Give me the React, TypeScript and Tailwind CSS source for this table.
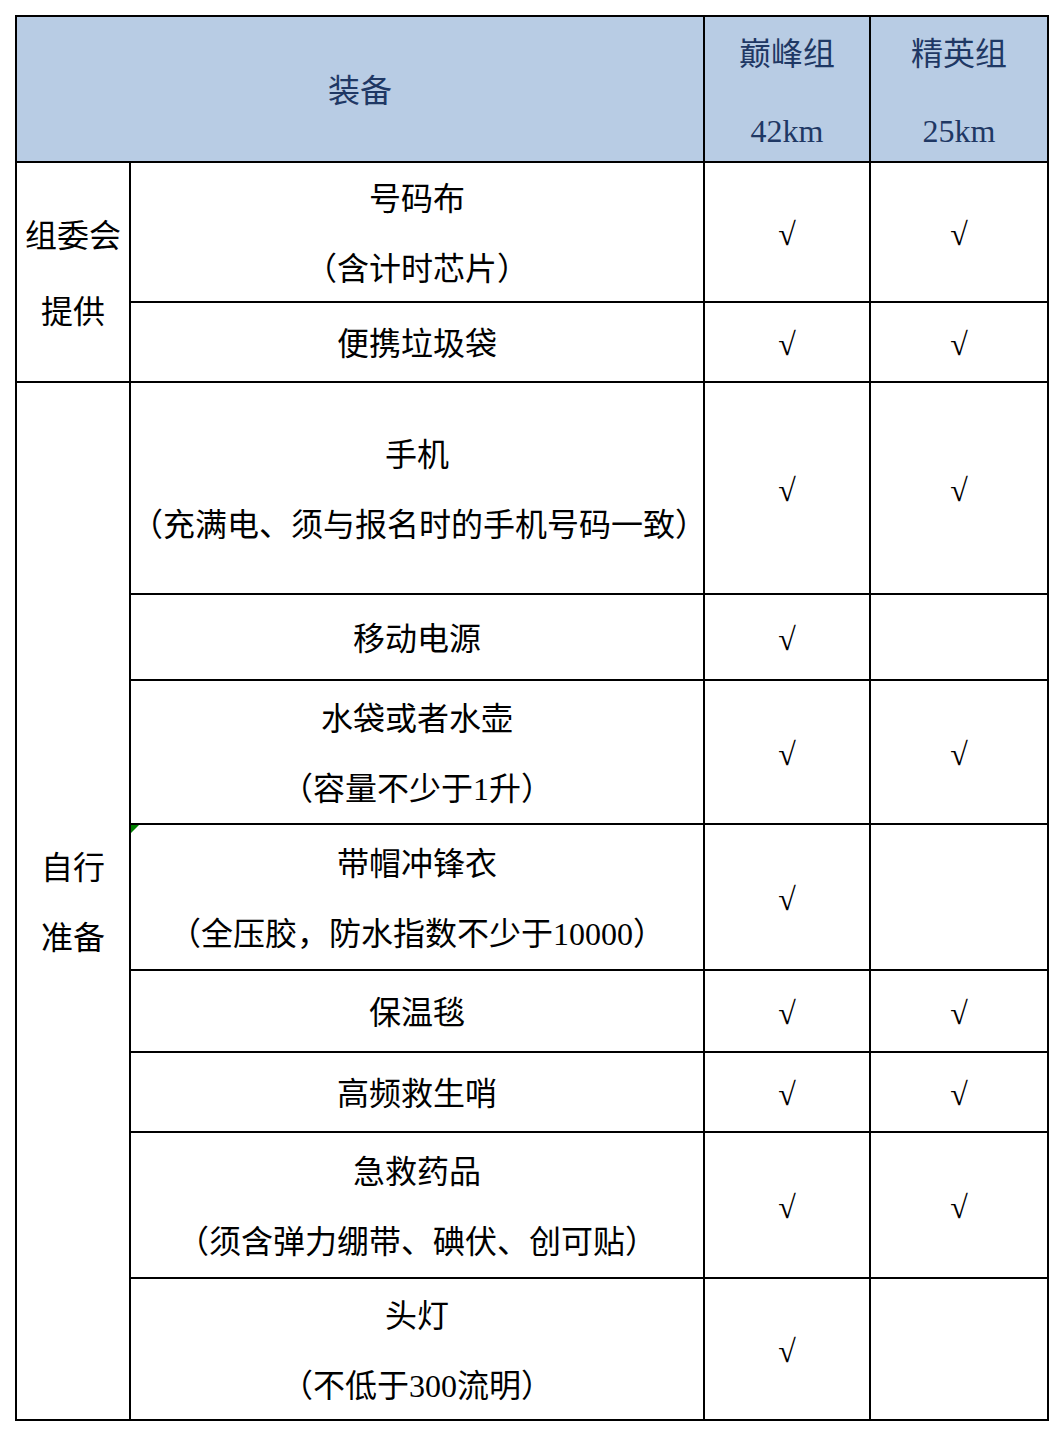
import React from 'react';

type Row = {
  item: string[];
  peak: boolean;
  elite: boolean;
  h: string;
  mark?: boolean;
};

const orgRows: Row[] = [
  { item: ['号码布', '（含计时芯片）'], peak: true, elite: true, h: 'h-[140px]' },
  { item: ['便携垃圾袋'], peak: true, elite: true, h: 'h-[80px]' },
];

const selfRows: Row[] = [
  { item: ['手机', '（充满电、须与报名时的手机号码一致）'], peak: true, elite: true, h: 'h-[212px]' },
  { item: ['移动电源'], peak: true, elite: false, h: 'h-[86px]' },
  { item: ['水袋或者水壶', '（容量不少于1升）'], peak: true, elite: true, h: 'h-[144px]' },
  { item: ['带帽冲锋衣', '（全压胶，防水指数不少于10000）'], peak: true, elite: false, h: 'h-[146px]', mark: true },
  { item: ['保温毯'], peak: true, elite: true, h: 'h-[82px]' },
  { item: ['高频救生哨'], peak: true, elite: true, h: 'h-[80px]' },
  { item: ['急救药品', '（须含弹力绷带、碘伏、创可贴）'], peak: true, elite: true, h: 'h-[146px]' },
  { item: ['头灯', '（不低于300流明）'], peak: true, elite: false, h: 'h-[142px]' },
];

const cell = 'border-2 border-black text-center align-middle p-0';

function Check({ on }: { on: boolean }) {
  return <td className={`${cell} pt-[3px]`}>{on && <span className="leading-none">√</span>}</td>;
}

function ItemRows({ rows, label }: { rows: Row[]; label: React.ReactNode }) {
  return (
    <>
      {rows.map((r, i) => (
        <tr key={r.item[0]} className={r.h}>
          {i === 0 && (
            <td rowSpan={rows.length} className={`${cell} pt-[4px]`}>
              {label}
            </td>
          )}
          <td className={`${cell} relative pt-[3px]`}>
            {r.mark && (
              <span className="absolute left-0 top-0 h-0 w-0 border-t-[8px] border-r-[8px] border-t-[#008000] border-r-transparent" />
            )}
            {r.item.map((t, j) => (
              <div key={t} className={j === 0 ? 'leading-[62px]' : 'mt-[8px] leading-[62px]'}>
                {t}
              </div>
            ))}
          </td>
          <Check on={r.peak} />
          <Check on={r.elite} />
        </tr>
      ))}
    </>
  );
}

function GroupHead({ name, dist }: { name: string; dist: string }) {
  return (
    <th className={`${cell} pt-[7px] font-normal`}>
      <div className="leading-[60px]">{name}</div>
      <div className="mt-[17px] leading-[60px]">{dist}</div>
    </th>
  );
}

export default function App() {
  return (
    <div
      className="min-h-screen bg-white pl-[15px] pt-[15px] text-[32px] text-black"
      style={{ fontFamily: '"Liberation Serif", "Noto Sans CJK SC", serif' }}
    >
      <table className="w-[1034px] table-fixed border-collapse">
        <colgroup>
          <col className="w-[114px]" />
          <col className="w-[574px]" />
          <col className="w-[166px]" />
          <col className="w-[178px]" />
        </colgroup>
        <thead>
          <tr className="h-[146px] bg-[#b8cce4] text-[#1f3864]">
            <th colSpan={2} className={`${cell} pt-[4px] font-normal`}>
              装备
            </th>
            <GroupHead name="巅峰组" dist="42km" />
            <GroupHead name="精英组" dist="25km" />
          </tr>
        </thead>
        <tbody>
          <ItemRows
            rows={orgRows}
            label={
              <>
                <div className="leading-[66px]">组委会</div>
                <div className="mt-[10px] leading-[66px]">提供</div>
              </>
            }
          />
          <ItemRows
            rows={selfRows}
            label={
              <>
                <div className="leading-[62px]">自行</div>
                <div className="mt-[8px] leading-[62px]">准备</div>
              </>
            }
          />
        </tbody>
      </table>
    </div>
  );
}
